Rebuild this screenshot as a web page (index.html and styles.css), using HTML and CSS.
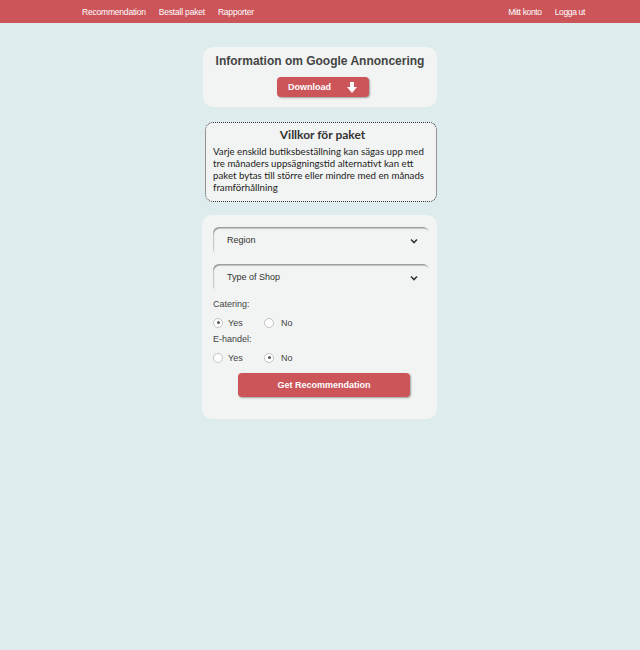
FILE: index.html
```html
<!DOCTYPE html>
<html lang="sv">
<head>
<meta charset="utf-8">
<title>Rekommendation</title>
<link rel="stylesheet" href="styles.css">
</head>
<body>
<nav class="topbar">
  <div class="nav-left">
    <a class="nav-link">Recommendation</a>
    <a class="nav-link">Bestall paket</a>
    <a class="nav-link">Rapporter</a>
  </div>
  <div class="nav-right">
    <a class="nav-link">Mitt konto</a>
    <a class="nav-link">Logga ut</a>
  </div>
</nav>
<main class="column">
  <section class="card info-card">
    <h2 class="info-title">Information om Google Annoncering</h2>
    <button class="btn btn-download">Download
      <svg class="dl-icon" width="10" height="11" viewBox="0 0 10 11"><path d="M3 0h4v5h3L5 11 0 5h3z" fill="#fff"/></svg>
    </button>
  </section>
  <section class="terms">
    <h3 class="terms-title">Villkor för paket</h3>
    <p class="terms-text">Varje enskild butiksbeställning kan sägas upp med tre månaders uppsägningstid alternativt kan ett paket bytas till större eller mindre med en månads framförhållning</p>
  </section>
  <section class="card form-card">
    <div class="select"><span>Region</span><svg width="8" height="6" viewBox="0 0 8 6"><path d="M1 1.5l3 3 3-3" fill="none" stroke="#333" stroke-width="1.6"/></svg></div>
    <div class="select select-last"><span>Type of Shop</span><svg width="8" height="6" viewBox="0 0 8 6"><path d="M1 1.5l3 3 3-3" fill="none" stroke="#333" stroke-width="1.6"/></svg></div>
    <div class="field-label">Catering:</div>
    <div class="radio-row">
      <label class="radio"><span class="dot checked"></span>Yes</label>
      <label class="radio"><span class="dot"></span>No</label>
    </div>
    <div class="field-label">E-handel:</div>
    <div class="radio-row">
      <label class="radio"><span class="dot"></span>Yes</label>
      <label class="radio"><span class="dot checked"></span>No</label>
    </div>
    <button class="btn btn-recommend">Get Recommendation</button>
  </section>
</main>
</body>
</html>
```
FILE: styles.css
```css
* { box-sizing: border-box; }
html, body { margin: 0; padding: 0; }
body {
  background: #deeced;
  font-family: "Liberation Sans", Arial, sans-serif;
  color: #444;
  height: 650px;
}
.topbar {
  height: 23px;
  background: #cc555a;
  display: flex;
  justify-content: space-between;
  align-items: center;
  padding: 0 55px 0 82px;
}
.nav-left, .nav-right { display: flex; gap: 13px; }
.nav-right { gap: 13px; }
.nav-link {
  color: #fff;
  font-size: 8.5px;
  letter-spacing: -0.2px;
  line-height: 10px;
  padding-top: 1px;
}
.nav-right .nav-link { letter-spacing: -0.35px; }
.column {
  width: 236px;
  margin: 24px auto 0;
  display: flex;
  flex-direction: column;
}
.card {
  background: #f2f4f3;
  border-radius: 10px;
}
.info-card {
  margin-left: 1px;
  width: 234px;
  height: 60px;
  display: flex;
  flex-direction: column;
  align-items: center;
  padding-top: 6px;
}
.info-title {
  margin: 0;
  font-size: 12px;
  font-weight: bold;
  color: #444;
  line-height: 16px;
}
.btn {
  border: none;
  background: #cc555a;
  color: #fff;
  font-family: "Liberation Sans", Arial, sans-serif;
  font-weight: bold;
  border-radius: 4px;
  box-shadow: 1px 1px 2px rgba(0,0,0,0.35);
  cursor: pointer;
}
.btn-download {
  margin: 8px 0 0 6px;
  width: 92px;
  height: 20px;
  font-size: 9px;
  display: flex;
  align-items: center;
  padding: 0 0 0 11px;
}
.dl-icon { margin-left: 16px; }
.terms {
  margin: 15px 0 0 3px;
  width: 232px;
  height: 80px;
  border: 1px dotted #333;
  border-radius: 8px;
  background: #f2f4f3;
  padding: 4px 4px 0 7px;
  font-family: Lato, "Open Sans", sans-serif;
}
.terms-title {
  margin: 0;
  text-align: center;
  font-size: 12px;
  font-weight: bold;
  color: #333;
  line-height: 15px;
}
.terms-text {
  margin: 3px 0 0;
  font-size: 9.7px;
  line-height: 12px;
  color: #222;
}
.form-card {
  margin-top: 13px;
  width: 235px;
  height: 204px;
  padding: 12px 8px 0 11px;
  display: flex;
  flex-direction: column;
}
.select {
  height: 28px;
  border-radius: 6px;
  box-shadow: inset 1px 2px 1px -0.5px #999;
  display: flex;
  align-items: center;
  justify-content: space-between;
  padding: 0 11px 0 14px;
  font-size: 9px;
  color: #333;
  margin-bottom: 9px;
}
.select-last { margin-bottom: 6px; }
.select span { margin-top: -2px; }
.field-label {
  font-size: 9px;
  color: #444;
  line-height: 12px;
}
.radio-row {
  display: flex;
  height: 21px;
  align-items: center;
  margin-top: 2px;
}
.radio {
  display: flex;
  align-items: center;
  font-size: 9px;
  color: #444;
  width: 51px;
}
.radio:last-child .dot { margin-right: 7px; }
.dot {
  width: 10px;
  height: 10px;
  border-radius: 50%;
  border: 1px solid #c4c4c4;
  background: #fff;
  margin-right: 5px;
  position: relative;
}
.dot.checked::after {
  content: "";
  position: absolute;
  left: 2.5px;
  top: 2.5px;
  width: 3px;
  height: 3px;
  border-radius: 50%;
  background: #555;
}
.btn-recommend {
  margin: 5px 0 0 25px;
  width: 172px;
  height: 24px;
  font-size: 9px;
}
```
